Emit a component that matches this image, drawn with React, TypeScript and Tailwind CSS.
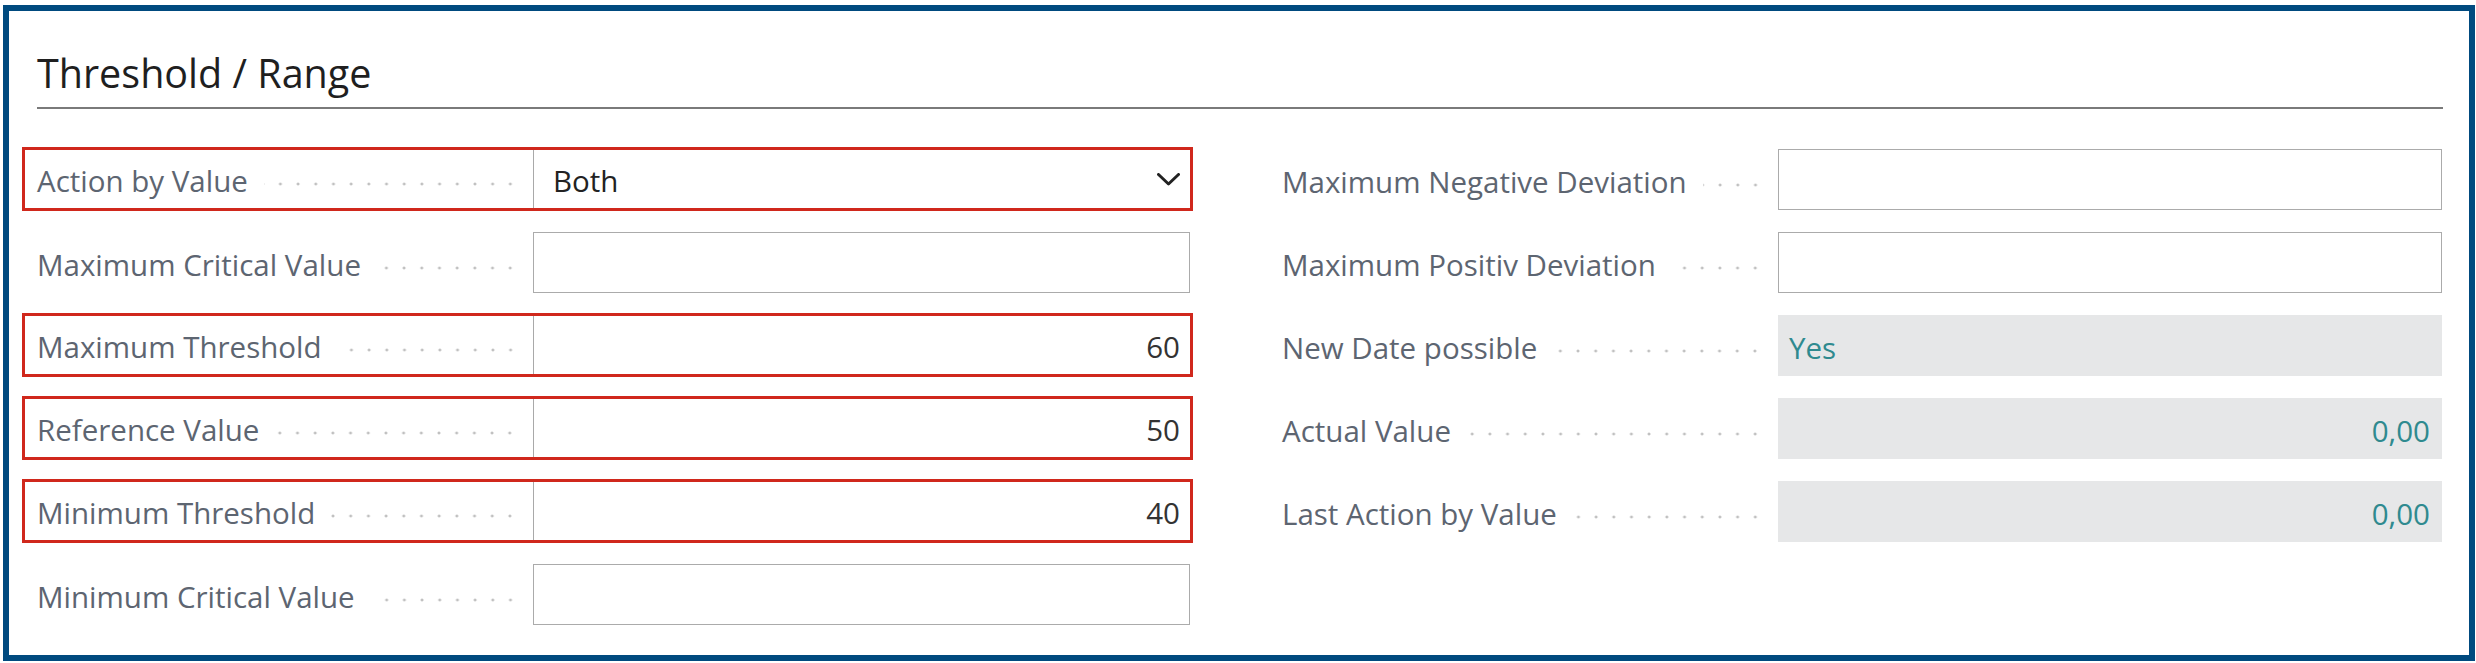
import React from "react";

type Field = {
  label: string;
  value?: string;
  kind?: "input" | "select" | "readonly";
  right?: boolean;
  red?: boolean;
};

const leftFields: Field[] = [
  { label: "Action by Value", value: "Both", kind: "select", red: true },
  { label: "Maximum Critical Value", kind: "input" },
  { label: "Maximum Threshold", value: "60", kind: "input", right: true, red: true },
  { label: "Reference Value", value: "50", kind: "input", right: true, red: true },
  { label: "Minimum Threshold", value: "40", kind: "input", right: true, red: true },
  { label: "Minimum Critical Value", kind: "input" },
];

const rightFields: Field[] = [
  { label: "Maximum Negative Deviation", kind: "input" },
  { label: "Maximum Positiv Deviation", kind: "input" },
  { label: "New Date possible", value: "Yes", kind: "readonly" },
  { label: "Actual Value", value: "0,00", kind: "readonly", right: true },
  { label: "Last Action by Value", value: "0,00", kind: "readonly", right: true },
];

function Chevron() {
  return (
    <svg width="23" height="13" viewBox="0 0 23 13" fill="none" className="shrink-0">
      <path d="M1.5 1.5 L11.5 11 L21.5 1.5" stroke="#222222" strokeWidth="3" strokeLinecap="round" strokeLinejoin="round" />
    </svg>
  );
}

function Value({ f }: { f: Field }) {
  if (f.kind === "readonly") {
    return (
      <div
        className={`flex-1 flex items-center bg-[#e6e7e8] ${
          f.right ? "justify-end pr-[12px]" : "pl-[11px]"
        }`}
      >
        <span className="pt-[5px] text-[29.5px] text-[#2f8a8f]">{f.value}</span>
      </div>
    );
  }
  const border = f.red ? "border-l border-[#a9a9a9]" : "border border-[#ababab]";
  if (f.kind === "select") {
    return (
      <div className={`flex-1 flex items-center justify-between bg-white pl-[19px] pr-[10px] ${border}`}>
        <span className="pt-[5px] text-[29.5px] text-[#222222]">{f.value}</span>
        <Chevron />
      </div>
    );
  }
  return (
    <div
      className={`flex-1 flex items-center bg-white ${border} ${
        f.right ? "justify-end pr-[10px]" : "pl-[19px]"
      }`}
    >
      {f.value ? <span className="pt-[5px] text-[29.5px] text-[#333333]">{f.value}</span> : null}
    </div>
  );
}

function Row({ f }: { f: Field }) {
  const slot = f.red ? "border-[3px] border-[#d0281c]" : "pt-[2px] pb-[1px] px-[3px]";
  const innerH = f.red ? "h-[58px]" : "h-[61px]";
  return (
    <div className={`h-[64px] ${slot}`}>
      <div className={`flex ${innerH}`}>
        <div className="w-[508px] shrink-0 flex items-center pl-[12px] pr-[14px]">
          <span className="pt-[5px] whitespace-nowrap text-[29.5px] text-[#5d6571]">{f.label}</span>
          <span className="flex-1 ml-[16px] mt-[10px] h-[4px] bg-[radial-gradient(circle,#c0c0c0_1.3px,transparent_1.7px)] bg-[length:17.7px_4px] bg-repeat-x bg-right" />
        </div>
        <Value f={f} />
      </div>
    </div>
  );
}

export default function App() {
  return (
    <div className="w-[2476px] h-[663px] bg-white pt-[5px] pl-[3px] pr-[1px] pb-[2px] font-['Open_Sans',sans-serif]">
      <div className="h-[656px] border-[6px] border-[#004a7f] bg-white">
        <h2 className="mt-[42px] ml-[28px] h-[40px] leading-[40px] text-[39.5px] font-normal text-[#1f1f1f] whitespace-nowrap">
          Threshold / Range
        </h2>
        <div className="mt-[14px] ml-[28px] mr-[26px] h-[2px] bg-[#7a7a7a]" />
        <div className="mt-[38px] ml-[13px] grid grid-cols-[1171px_1178px] gap-x-[74px]">
          <div className="flex flex-col gap-y-[19px]">
            {leftFields.map((f) => (
              <Row key={f.label} f={f} />
            ))}
          </div>
          <div className="flex flex-col gap-y-[19px]">
            {rightFields.map((f) => (
              <Row key={f.label} f={f} />
            ))}
          </div>
        </div>
      </div>
    </div>
  );
}
